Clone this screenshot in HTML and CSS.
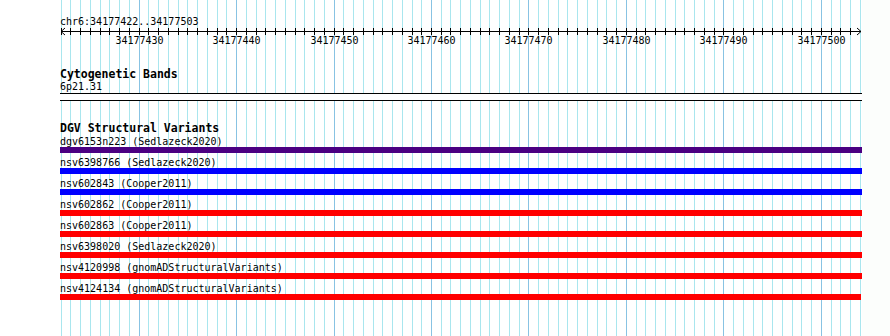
FILE: index.html
```html
<!DOCTYPE html>
<html lang="en">
<head>
  <meta charset="UTF-8">
  <title>chr6:34177422..34177503</title>
  <link rel="stylesheet" href="styles.css">
</head>
<body>

<div class="view">
  <!-- сетка по основаниям, под треками -->
  <svg id="grid" class="grid" width="890" height="336"></svg>

  <div class="tracks">
    <div class="location">chr6:34177422..34177503</div>
    <svg id="ruler" class="ruler" width="802" height="20"></svg>

    <section class="track track-bands">
      <h3 class="track-title">Cytogenetic Bands</h3>
      <div class="feature-label">6p21.31</div>
      <div class="band"></div>
    </section>

    <section class="track track-dgv">
      <h3 class="track-title">DGV Structural Variants</h3>
      <ul class="features">
        <li><div class="feature-label">dgv6153n223 (Sedlazeck2020)</div><div class="bar bar-indigo"></div></li>
        <li><div class="feature-label">nsv6398766 (Sedlazeck2020)</div><div class="bar bar-blue"></div></li>
        <li><div class="feature-label">nsv602843 (Cooper2011)</div><div class="bar bar-blue"></div></li>
        <li><div class="feature-label">nsv602862 (Cooper2011)</div><div class="bar bar-red"></div></li>
        <li><div class="feature-label">nsv602863 (Cooper2011)</div><div class="bar bar-red"></div></li>
        <li><div class="feature-label">nsv6398020 (Sedlazeck2020)</div><div class="bar bar-red"></div></li>
        <li><div class="feature-label">nsv4120998 (gnomADStructuralVariants)</div><div class="bar bar-red"></div></li>
        <li><div class="feature-label">nsv4124134 (gnomADStructuralVariants)</div><div class="bar bar-red" style="width: 801px"></div></li>
      </ul>
    </section>
  </div>
</div>

<script>
  // Параметры видимой области
  const START = 34177422;
  const BASES = 82;
  const X0 = 61.2;
  const STEP = 9.745;
  const LEFT = 60;
  const NS = 'http://www.w3.org/2000/svg';

  function baseX(i) {
    return Math.floor(X0 + i * STEP) + 0.5;
  }

  function el(name, attrs) {
    const node = document.createElementNS(NS, name);
    for (const key in attrs) {
      node.setAttribute(key, attrs[key]);
    }
    return node;
  }

  // Вертикальные линии сетки
  const grid = document.getElementById('grid');
  for (let i = 0; i <= BASES; i++) {
    const x = baseX(i);
    const major = (START + i) % 10 === 0;
    grid.appendChild(el('line', {
      x1: x, x2: x, y1: 0, y2: 336,
      class: major ? 'grid-major' : 'grid-minor'
    }));
  }

  // Линейка с делениями и подписями
  const ruler = document.getElementById('ruler');
  ruler.appendChild(el('line', { x1: 1, x2: 801, y1: 4.5, y2: 4.5, class: 'ruler-line' }));
  ruler.appendChild(el('polyline', { points: '5,1 1,4.5 5,8', class: 'ruler-line' }));
  ruler.appendChild(el('polyline', { points: '797,1 801,4.5 797,8', class: 'ruler-line' }));

  for (let i = 0; i < BASES; i++) {
    const x = baseX(i) - LEFT;
    ruler.appendChild(el('line', { x1: x, x2: x, y1: 1, y2: 8, class: 'ruler-line' }));
    if ((START + i) % 10 === 0) {
      const label = el('text', { x: x, y: 17, class: 'ruler-label' });
      label.textContent = START + i;
      ruler.appendChild(label);
    }
  }
</script>
</body>
</html>
```

FILE: styles.css
```css
body {
  margin: 0;
  background-color: #fcfefc;
  font-family: 'DejaVu Sans Mono', monospace;
  font-size: 10px;
  color: #000;
}

.view {
  position: relative;
  width: 890px;
  height: 336px;
  overflow: hidden;
}

.view::before {
  content: '';
  position: absolute;
  left: 0;
  top: 0;
  width: 862px;
  height: 100%;
  background-color: #fff;
}

.grid {
  position: absolute;
  left: 0;
  top: 0;
}

.grid-minor {
  stroke: #a9e6ee;
  stroke-width: 1;
}

.grid-major {
  stroke: #88c3e3;
  stroke-width: 1;
}

.tracks {
  position: relative;
  width: 802px;
  padding-left: 60px;
}

.location {
  padding-top: 16px;
  line-height: 11px;
}

.ruler {
  display: block;
}

.ruler-line {
  stroke: #000;
  stroke-width: 1;
  fill: none;
}

.ruler-label {
  font-family: 'DejaVu Sans Mono', monospace;
  font-size: 10px;
  text-anchor: middle;
  fill: #000;
}

.track-title {
  margin: 0;
  font-size: 11.5px;
  font-weight: bold;
  line-height: 14px;
}

.track-bands {
  margin-top: 20px;
}

.track-dgv {
  margin-top: 20px;
}

.feature-label {
  line-height: 11px;
  white-space: nowrap;
}

.band {
  margin-top: 1px;
  height: 6px;
  border-top: 1px solid #000;
  border-bottom: 1px solid #000;
  background-color: #fff;
}

.features {
  list-style: none;
  margin: 1px 0 0;
  padding: 0;
}

.features li {
  margin-bottom: 4px;
}

.bar {
  width: 802px;
  height: 6px;
}

.bar-indigo {
  background-color: #4b0082;
}

.bar-blue {
  background-color: #0000ff;
}

.bar-red {
  background-color: #ff0000;
}
```
